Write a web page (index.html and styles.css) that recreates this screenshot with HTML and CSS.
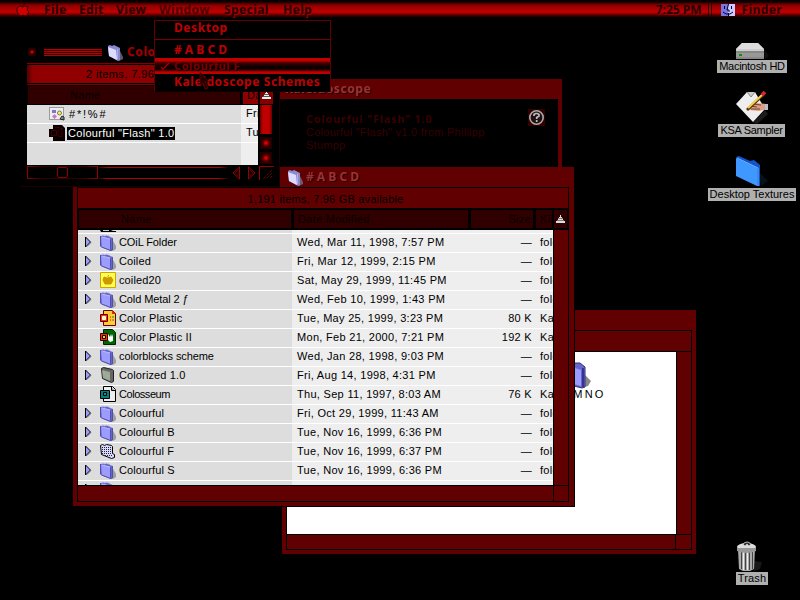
FILE: index.html
```html
<!DOCTYPE html>
<html lang="en">
<head>
<meta charset="utf-8">
<title>Finder</title>
<link rel="stylesheet" href="styles.css">
</head>
<body>
<svg class="defs" width="0" height="0">
  <symbol id="folder" viewBox="0 0 16 17">
    <path d="M12 5l4 7v3l-3 2z" fill="#555" opacity=".45"/>
    <path d="M1 2l2-1 2 1 1-1 3 1 1 1 3 1v12l-2 1-10-4z" fill="#6666cc"/>
    <path d="M1 3l9 2v11l-8-3z" fill="#9c9cff"/>
    <path d="M2 3l8 2M1 2l2-1 2 1 1-1 3 1" stroke="#c0c0f8" fill="none"/>
    <path d="M.5 2v10.500M10.500 5.500v10M12.500 4.500v11.500l-2 .5-9-3.500" stroke="#5050aa" fill="none"/>
  </symbol>
  <symbol id="folder-light" viewBox="0 0 16 17">
    <path d="M12 5l4 8v2l-4 2z" fill="#776e88" opacity=".8"/>
    <path d="M1 2l2-1 2 1 2-1 2 1 4 2v12l-2 1-9-5z" fill="#8a8ad0"/>
    <path d="M1 3l8 3 1 10-8-4z" fill="#dcdcff"/>
    <path d="M10.500 5v10" stroke="#aeaef0"/>
  </symbol>
  <symbol id="tri" viewBox="0 0 8 12"><path d="M1.500 1v10l5-5z" fill="#9c9cff" stroke="#000"/><path d="M3.500 10.500l4-4" stroke="#777" opacity=".5"/></symbol>
</svg>

<header class="menubar">
  <svg class="apple" width="14" height="14" viewBox="0 0 14 14"><path d="M9 0L7 3M7 4L4 3 1 5v4l3 4 3-1 3 1 3-4-2-2 1-3-3-1-2 1z" fill="#d00000" stroke="#240000" stroke-width=".8"/></svg>
  <nav><span class="m-file">File</span><span class="m-edit">Edit</span><span class="m-view">View</span><span class="m-window open">Window</span><span class="m-special">Special</span><span class="m-help">Help</span></nav>
  <span class="clock">7:25 PM</span>
  <span class="grip"></span>
  <svg class="face" width="14" height="12" viewBox="0 0 14 12"><path fill="#7777dd" d="M0 0h7v12H0z"/><path fill="#ccccff" d="M7 0h7v12H7z"/><path d="M3.500 2v3M10.500 2v3M7.500 0L6 6h2v2M2 8l3 2h4l3-2M7.500 9v3" stroke="#000033" fill="none"/></svg>
  <span class="finder">Finder</span>
</header>

<main class="desktop">
  <section class="window back">
    <div class="titlebar"></div>
    <div class="frame">
      <div class="info"></div>
      <div class="canvas">
        <div class="big-item">
          <svg width="32" height="32" viewBox="0 0 32 32"><path d="M24 14l8 8-3 5-7 2z" fill="#888"/><path d="M2 3l6-2 5 3 8 0 5 4v20l-3 1-20-5z" fill="#6666cc" stroke="#333377"/><path d="M3 5l19 6v16L3 22z" fill="#9c9cff"/><path d="M24 9v19" stroke="#333399" stroke-width="2"/></svg>
          <span>M N O</span>
        </div>
      </div>
      <div class="vbar"></div><div class="hbar"></div><div class="corner"></div>
    </div>
  </section>

  <section class="window about">
    <div class="titlebar"><span>Kaleidoscope</span></div>
    <div class="about-body">
      <div class="about-text"><b>Colourful "Flash" 1.0</b><p>Colourful "Flash" v1.0 from Phillipp<br>Stumpp</p></div>
      <svg class="help" width="17" height="17" viewBox="0 0 17 17"><path d="M0 0h17v17H0z" fill="#300"/><circle cx="8.500" cy="8.500" r="6.700" fill="#211" stroke="#aaa" stroke-width="1.600"/><path d="M6 7V5.500L7.500 4.500h2L11 5.500V7L8.700 8.500V10M8.700 11v2" fill="none" stroke="#bbb" stroke-width="1.700"/></svg>
    </div>
  </section>

  <section class="window abcd">
    <div class="titlebar"><svg width="16" height="17"><use href="#folder-light"/></svg><span># A B C D</span></div>
    <div class="frame">
      <div class="info">1,191 items, 7.96 GB available</div>
      <div class="heads"><span class="h-name">Name</span><span class="h-date">Date Modified</span><span class="h-size">Size</span><span class="h-kind">Kind</span><span class="h-sort"><svg width="9" height="8" viewBox="0 0 9 8"><path d="M4 0h1v2h1v2h1v2h2v2H0V6h2V4h1V2h1z" fill="#ddd"/><path d="M2 3.500h5M1 5.500h7" stroke="#777"/></svg></span></div>
      <div class="list">
        <div class="row part-top"><span class="name"><i></i><svg width="16" height="3" viewBox="0 0 16 3"><path d="M0 0h11l2 1h3v1H1z" fill="#000"/><path d="M3 .5h6" stroke="#ccc"/></svg></span></div>
        <div class="row"><span class="name"><svg width="8" height="12"><use href="#tri"/></svg><svg width="16" height="17"><use href="#folder"/></svg><b class="tight">COiL Folder</b></span><span class="date">Wed, Mar 11, 1998, 7:57 PM</span><span class="size">—</span><span class="kind">folder</span></div>
        <div class="row"><span class="name"><svg width="8" height="12"><use href="#tri"/></svg><svg width="16" height="17"><use href="#folder"/></svg><b>Coiled</b></span><span class="date">Fri, Mar 12, 1999, 2:15 PM</span><span class="size">—</span><span class="kind">folder</span></div>
        <div class="row"><span class="name"><svg width="8" height="12"><use href="#tri"/></svg><svg width="16" height="16" viewBox="0 0 16 16"><path d="M.5.5h15v15H.5z" fill="#ffff55" stroke="#d9a000"/><path d="M9 3L7.500 5M7 6L4 5 3 8l2 4 3 0 3 0 2-4-2-3-3 1z" fill="#cc9900" stroke="#cc9900"/></svg><b>coiled20</b></span><span class="date">Sat, May 29, 1999, 11:45 PM</span><span class="size">—</span><span class="kind">folder</span></div>
        <div class="row"><span class="name"><svg width="8" height="12"><use href="#tri"/></svg><svg width="16" height="17"><use href="#folder"/></svg><b class="tight">Cold Metal 2 ƒ</b></span><span class="date">Wed, Feb 10, 1999, 1:43 PM</span><span class="size">—</span><span class="kind">folder</span></div>
        <div class="row"><span class="name"><i></i><svg width="16" height="16" viewBox="0 0 16 16"><path d="M3.500.5h9l3 3v12h-12z" fill="#ffcc33" stroke="#660000"/><path d="M12 0v4h4" fill="#cc3300"/><path d="M.5 4.500h7v7h-7z" fill="#f30" stroke="#600"/><path d="M2.500 6.500h3v3h-3z" fill="#ffff66" stroke="#fff"/><path d="M10 7h1M10 10h1" stroke="#f00"/><path d="M12 7h2" stroke="#090"/><path d="M12 10h2" stroke="#36c"/></svg><b>Color Plastic</b></span><span class="date">Tue, May 25, 1999, 3:23 PM</span><span class="size">80 K</span><span class="kind">Kaleidoscope</span></div>
        <div class="row"><span class="name"><i></i><svg width="16" height="16" viewBox="0 0 16 16"><path d="M3.500.5h9l3 3v12h-12z" fill="#006600" stroke="#002200"/><path d="M8 5l2 3 1-3 1 3 1-3v7l-3 1-2-2z" fill="#fff"/><path d="M.5 4.500h7v7h-7z" fill="#f30" stroke="#300"/><path d="M2.500 6.500h3v3h-3z" fill="#fc3" stroke="#000"/></svg><b>Color Plastic II</b></span><span class="date">Mon, Feb 21, 2000, 7:21 PM</span><span class="size">192 K</span><span class="kind">Kaleidoscope</span></div>
        <div class="row"><span class="name"><svg width="8" height="12"><use href="#tri"/></svg><svg width="16" height="17"><use href="#folder"/></svg><b class="tight">colorblocks scheme</b></span><span class="date">Wed, Jan 28, 1998, 9:03 PM</span><span class="size">—</span><span class="kind">folder</span></div>
        <div class="row"><span class="name"><svg width="8" height="12"><use href="#tri"/></svg><svg width="16" height="16" viewBox="0 0 16 16"><path d="M1.500 1.500l2-1 9 2 1 1v11l-2 1-9-4z" fill="#666" stroke="#222"/><path d="M2 3l8 2v9l-7-3z" fill="#9a9"/><path d="M3 5h2v2H3zM7 8h2v2H7z" fill="#cca277"/><path d="M6 5h2v2H6zM4 9h2v2H4z" fill="#77b5aa"/></svg><b>Colorized 1.0</b></span><span class="date">Fri, Aug 14, 1998, 4:31 PM</span><span class="size">—</span><span class="kind">folder</span></div>
        <div class="row"><span class="name"><i></i><svg width="16" height="16" viewBox="0 0 16 16"><path d="M3.500.5h9l3 3v12h-12z" fill="#eee" stroke="#000"/><path d="M11.500 1v3.500H15" fill="#aaa" stroke="#000"/><path d="M.5 4.500h9v8h-9z" fill="#008080" stroke="#000"/><path d="M3.500 6.500h3v3h-3z" fill="#099" stroke="#000"/></svg><b class="tighter">Colosseum</b></span><span class="date">Thu, Sep 11, 1997, 8:03 AM</span><span class="size">76 K</span><span class="kind">Kaleidoscope</span></div>
        <div class="row"><span class="name"><svg width="8" height="12"><use href="#tri"/></svg><svg width="16" height="17"><use href="#folder"/></svg><b>Colourful</b></span><span class="date">Fri, Oct 29, 1999, 11:43 AM</span><span class="size">—</span><span class="kind">folder</span></div>
        <div class="row"><span class="name"><svg width="8" height="12"><use href="#tri"/></svg><svg width="16" height="17"><use href="#folder"/></svg><b>Colourful B</b></span><span class="date">Tue, Nov 16, 1999, 6:36 PM</span><span class="size">—</span><span class="kind">folder</span></div>
        <div class="row"><span class="name"><svg width="8" height="12"><use href="#tri"/></svg><svg width="16" height="16" viewBox="0 0 16 16"><path d="M.5 2.500l2-1 2 1 2-1 5 1 1 1v7l2 1v3l-3 1-10-4z" fill="#d8d8ff" stroke="#000"/><path d="M2 4.500h10M2 6.500h10M2 8.500h10M2 10.500h10M5 12.500h8" stroke="#223" stroke-dasharray="1 1"/></svg><b>Colourful F</b></span><span class="date">Tue, Nov 16, 1999, 6:37 PM</span><span class="size">—</span><span class="kind">folder</span></div>
        <div class="row"><span class="name"><svg width="8" height="12"><use href="#tri"/></svg><svg width="16" height="17"><use href="#folder"/></svg><b>Colourful S</b></span><span class="date">Tue, Nov 16, 1999, 6:36 PM</span><span class="size">—</span><span class="kind">folder</span></div>
        <div class="row part-end"><span class="name"><svg width="8" height="12"><use href="#tri"/></svg><svg width="16" height="17"><use href="#folder"/></svg><b>Colours ƒ</b></span></div>
      </div>
      <div class="vbar"></div><div class="hbar"></div><div class="corner"></div>
    </div>
  </section>

  <section class="window front">
    <div class="titlebar">
      <span class="box"></span><span class="stripes"></span>
      <svg width="16" height="17"><use href="#folder-light"/></svg><span class="title">Colo</span>
    </div>
    <div class="info"><span>2 items, 7.96</span></div>
    <div class="heads"><span class="h-name">Name</span><span class="h-date">Date</span><span class="h-sort"><svg width="9" height="8" viewBox="0 0 9 8"><path d="M4 0h1v2h1v2h1v2h2v2H0V6h2V4h1V2h1z" fill="#eee"/><path d="M2 3.500h5M1 5.500h7" stroke="#555"/></svg></span></div>
    <div class="middle">
      <div class="list">
        <div class="row"><span class="name"><svg width="16" height="14" viewBox="0 0 16 14"><path d="M.5.5h14v12H.5z" fill="#eee" stroke="#555" stroke-dasharray="1 1"/><path d="M3 3h4v3H3z" fill="#7777cc"/><circle cx="10.500" cy="6" r="2" fill="#ffee55" stroke="#776"/><path d="M5.500 7L8 9.500 5.500 12 3 9.500z" fill="#c7c"/><path d="M11 12l2-3 2 1v3z" fill="#888" stroke="#222"/></svg><b class="wide">#*!%#</b></span><span class="date">Fri,</span></div>
        <div class="row"><span class="name"><svg width="16" height="16" viewBox="0 0 16 16"><path d="M4 0h9l3 3v13H4v-4H0V4h4z" fill="#080000"/><path d="M2.500 5.500h5v5h-5zM9 5l4-2v9l-4-1zM6 2.500h5" fill="none" stroke="#400"/></svg><b class="selected">Colourful "Flash" 1.0</b></span><span class="date">Tue,</span></div>
        <div class="row last"><span class="name"></span><span class="date"></span></div>
      </div>
      <div class="scroll"><span class="thumb"></span><span class="box"></span><span class="box"></span></div>
    </div>
    <div class="bottom">
      <span class="hthumb"><i></i></span><span class="track"></span>
      <svg width="24" height="14" viewBox="0 0 24 14"><path d="M7.500 1v12L1 7zM16.500 1v12L23 7z" fill="#100" stroke="#900"/><path d="M6 4L3 7l3 3M18 4l3 3-3 3" stroke="#500" fill="none"/></svg>
      <svg class="grow" width="15" height="14" viewBox="0 0 15 14"><path d="M.5 14V.5H15" stroke="#900" fill="none"/><path d="M13 4L4 13M13 7l-6 6M13 10l-3 3" stroke="#800" stroke-dasharray="1 1"/></svg>
    </div>
  </section>

  <figure class="icon hd"><svg width="34" height="18" viewBox="0 0 34 18"><path d="M29 7l5 7-4 3z" fill="#111"/><path d="M7 1h16l6 6v10H1V7z" fill="#999"/><path d="M7 1h16l6 6H1z" fill="#ddd"/><path d="M1 8h28" stroke="#fff"/><path d="M1 10h28M1 16h28" stroke="#777"/><path d="M4 12h3v2H4z" fill="#090"/></svg><figcaption>Macintosh HD</figcaption></figure>
  <figure class="icon ksa"><svg width="34" height="33" viewBox="0 0 34 33"><path d="M18 32l12-13 3 4-11 10z" fill="#1b1b1b"/><path d="M1 13L12 1h8l10 17-12 13z" fill="#eee"/><path d="M12 1l4 5 4-5" stroke="#888" fill="#ccc"/><path d="M13 17l8-5 10 1 1 5-8 2-10-1z" fill="#dba080"/><path d="M15 15l7 1M16 18l9 0M18 13l8 1" stroke="#774030"/><path d="M30 13h3v6h-3z" fill="#bbc"/><path d="M12 19L29 3" stroke="#543300" stroke-width="3"/><path d="M13 17L27 4" stroke="#f4cd55" stroke-width="2"/><path d="M27 4l3-3" stroke="#e02030" stroke-width="3.500"/></svg><figcaption>KSA Sampler</figcaption></figure>
  <figure class="icon tex"><svg width="34" height="34" viewBox="0 0 34 34"><path d="M24 18l9 9-7 5z" fill="#06121a"/><path d="M1 3l3-1 11 5 4-1 6 5v21h-3z" fill="#1155cc"/><path d="M1 4l21 10v18L1 22z" fill="#3f98ff"/><path d="M2 4l21 10v18" fill="none" stroke="#75baff"/></svg><figcaption>Desktop Textures</figcaption></figure>
  <figure class="icon trash"><svg width="30" height="32" viewBox="0 0 30 32"><path d="M18 21l8 1-2 7-6 2z" fill="#181818"/><path d="M2 9h17l-1 20-4 2H7l-4-2z" fill="#aaa"/><path d="M5.500 12v17M9.500 12v18M13.500 12v18M16.500 12v17" stroke="#444"/><path d="M7.500 12v18M11.500 12v18" stroke="#eee"/><ellipse cx="10.500" cy="7" rx="9.500" ry="4" fill="#ddd"/><path d="M1 8v3q10 4 19 0V8" fill="#999"/><path d="M7 4q4-4 8 0l-2 2-2-2-2 2z" fill="#333" stroke="#bbb"/></svg><figcaption>Trash</figcaption></figure>

  <div class="menu">
    <div class="item first">Desktop</div>
    <div class="item abc"># A B C D</div>
    <div class="item hot"><svg width="14" height="12" viewBox="0 0 14 12"><path d="M1 7l2 2 6-6" stroke="#a00" stroke-width="1.300" fill="none"/></svg>Colourful F</div>
    <div class="item kal">Kaleidoscope Schemes</div>
  </div>
  <svg class="pointer" width="12" height="18" viewBox="0 0 12 18"><path d="M1 0l9 10H6l3 6-3 1-2-6-3 2z" fill="#200" stroke="#700" stroke-width=".7"/></svg>
</main>
</body>
</html>
```

FILE: styles.css
```css
* { box-sizing: border-box; }
body { margin: 0; width: 800px; height: 600px; overflow: hidden; background: #000; color: #000; font: 11px/14px "Liberation Sans", sans-serif; letter-spacing: .3px; white-space: nowrap; }
.defs { position: absolute; }
svg { display: block; flex: none; }
p, figure { margin: 0; }

.menubar { display: flex; align-items: center; height: 20px; padding: 0 18px 0 16px; background: linear-gradient(#000 0, #100000 2px, #600 4px, #960000 6px, #b00000 10px, #c80000 12px, #800000 14px, #300 16px, #000 18px); font: bold 12px/18px "Noto Sans", sans-serif; letter-spacing: .4px; color: #2a0000; text-shadow: 1px 1px #a00000; }
.menubar nav { display: flex; flex: 1; }
.m-file { width: 35px; margin-left: 14px; }
.m-edit { width: 37px; }
.m-view { width: 43px; }
.m-window { width: 65px; }
.m-special { width: 59px; }
.open { color: #500000; text-shadow: none; letter-spacing: .5px; }
.clock { letter-spacing: 0; }
.grip { width: 4px; height: 12px; margin: 0 9px 0 6px; border: solid #200; border-width: 0 1px; }
.face { margin-right: 7px; }

.window { position: absolute; display: flex; flex-direction: column; overflow: hidden; background: #600000; }
.titlebar { flex: none; display: flex; align-items: center; font: bold 12px/16px "Noto Sans", sans-serif; letter-spacing: .6px; color: #993333; text-shadow: 1px 1px #200; }
.frame { flex: 1; display: grid; border: 1px solid #000; }
.vbar, .info { border-bottom: 1px solid #000; }
.vbar { border-left: 1px solid #000; }

.back { left: 282px; top: 310px; width: 414px; height: 244px; padding: 0 4px 4px; }
.back .titlebar { height: 20px; }
.back .frame { grid-template: 21px 183px 1fr / 389px 1fr; }
.back .info, .abcd .info { grid-column: 1 / 3; }
.canvas { background: #fff; border-bottom: 1px solid #000; display: flex; justify-content: flex-end; padding: 7px 73px 0 0; }
.big-item { display: flex; flex-direction: column; align-items: flex-end; width: 62px; }
.big-item svg { margin-right: 12px; }
.big-item span { margin-top: -4px; letter-spacing: -.4px; }
.hbar { border-right: 1px solid #000; }

.about { left: 280px; top: 79px; width: 282px; height: 88px; padding-right: 4px; }
.about .titlebar { height: 20px; padding-left: 5px; }
.about-body { flex: 1; display: flex; background: #000; padding: 10px 13px 0 26px; color: #380000; }
.about-text { flex: 1; padding-top: 3px; line-height: 13px; letter-spacing: .26px; }
.about-text b { font: bold 11px/13px "Noto Sans", sans-serif; letter-spacing: .72px; }

.abcd { left: 73px; top: 167px; width: 502px; height: 340px; padding: 0 5px 4px 4px; border: solid #000; border-width: 0 1px 1px 0; }
.abcd .titlebar { height: 20px; padding-left: 210px; gap: 3px; letter-spacing: 0; }
.abcd .frame { grid-template: 21px 21px 256px 1fr / 476px 1fr; }
.info { text-align: center; line-height: 22px; }
.abcd .info { padding-left: 5px; letter-spacing: .2px; }
.heads { display: flex; line-height: 18px; }
.heads span { overflow: hidden; background: #300000; color: #080000; }
.abcd .heads { grid-column: 1 / 3; padding: 1px 0 2px 1px; gap: 3px; background: #000; }
.abcd .h-name { width: 212px; padding-left: 42px; }
.abcd .h-date { width: 174px; padding-left: 4px; }
.abcd .h-size { width: 62px; padding-right: 2px; text-align: right; }
.abcd .h-kind { width: 16px; padding-left: 4px; }
.abcd .h-sort { width: 13px; padding: 5px 0 0 2px; margin-left: -1px; }
.list { overflow: hidden; background: #fff; }
.row { display: grid; grid-template-columns: 214px 179px 61px 1fr; height: 19px; line-height: 18px; background: linear-gradient(#fff 1px, transparent 1px), linear-gradient(90deg, #ddd 214px, #eee 214px); }
.row b { font-weight: normal; letter-spacing: .12px; }
.row b.tight { letter-spacing: -.1px; }
.row b.tighter { letter-spacing: -.45px; }
.row b.wide { letter-spacing: 1.8px; }
.name { display: flex; align-items: center; padding-left: 6px; min-width: 0; }
.abcd .name { height: 18px; }
.abcd .name b { margin-top: -1px; }
.name i { width: 8px; }
.name > :nth-child(2) { margin: 0 3px 0 8px; }
.date { padding-left: 5px; }
.size { text-align: right; }
.kind { padding-left: 8px; overflow: hidden; min-width: 0; }
.row.part-top { height: 3px; background: linear-gradient(90deg, #ddd 214px, #eee 214px); }
.row.part-top .name { height: 3px; }
.abcd .list { width: 475px; border-bottom: 1px solid #000; }
.abcd .vbar { margin-left: -1px; }
.abcd .hbar { margin-right: 0; }

.front { left: 20px; top: 42px; width: 260px; height: 145px; background: #000; padding-left: 7px; border: solid #1a0000; border-width: 0 1px 1px 0; }
.front .titlebar { height: 20px; color: #a00000; }
.box { width: 12px; height: 12px; background: radial-gradient(#e00000 0 15%, #700000 35%, #260000 70%); border: 1px solid #200; }
.front .titlebar .box { width: 8px; height: 8px; margin-left: 1px; }
.stripes { width: 58px; height: 7px; margin: 0 5px 0 8px; background: repeating-linear-gradient(#b80000 0 1px, #300000 1px 2px); }
.title { margin-left: 4px; }
.front .info { height: 22px; padding: 1px 0; width: 231px; border: 1px solid #800000; border-width: 1px 0; line-height: 18px; margin-top: 1px; text-align: left; }
.front .info span { display: block; background: linear-gradient(90deg, #500 0, #900000 6px); padding-left: 59px; letter-spacing: .4px; height: 18px; overflow: hidden; }
.front .heads { height: 20px; padding: 1px 0 1px 1px; gap: 3px; }
.front .h-name { width: 212px; padding-left: 42px; }
.front .h-date { width: 15px; background: #900000; padding-left: 4px; }
.front .h-sort { width: 13px; background: #800000; padding: 5px 0 0 2px; margin-left: -1px; }
.middle { display: flex; height: 60px; }
.front .list { width: 231px; }
.front .row { grid-template-columns: 214px 1fr; height: 19px; padding: 0 0 1px; line-height: 16px; background: linear-gradient(transparent 18px, #fff 18px), linear-gradient(90deg, #ddd 214px, #eee 214px); }
.front .row.last { height: 22px; background: linear-gradient(90deg, #ddd 214px, #eee 214px); }
.front .name { padding-left: 22px; }
.front .name > b { margin: 0 0 0 3px; padding: 0 1px; line-height: 13px; }
.front .name > .selected { background: #000; color: #fff; margin-left: 2px; letter-spacing: .3px; }
.scroll { display: flex; flex-direction: column; align-items: center; gap: 3px; width: 16px; }
.thumb { width: 12px; height: 29px; background: linear-gradient(90deg, #600, #c00000 3px 9px, #600); }
.bottom { display: flex; height: 15px; padding-top: 1px; }
.hthumb { width: 71px; height: 13px; border: 1px solid; border-image: linear-gradient(90deg, #900, #300 20%, #300 80%, #900) 1; display: flex; justify-content: center; }
.hthumb i { width: 11px; border: solid #800; border-width: 1px; border-radius: 2px; }
.track { width: 129px; height: 12px; margin: 1px 4px 0 1px; background: linear-gradient(90deg, #300, #b00000 8px 120px, #200) top / 100% 1px no-repeat, linear-gradient(90deg, #300, #b00000 8px 120px, #200) bottom / 100% 1px no-repeat; }
.grow { margin-left: 3px; }

.icon { position: absolute; display: flex; flex-direction: column; align-items: center; letter-spacing: -.3px; }
.icon figcaption { width: 100%; height: 13px; background: #b0b0b0; line-height: 13px; text-align: center; }
.hd { left: 717px; top: 42px; width: 70px; }
.ksa { left: 718px; top: 91px; width: 67px; }
.tex { left: 708px; top: 154px; width: 88px; letter-spacing: 0; }
.trash { left: 736px; top: 540px; width: 32px; letter-spacing: .2px; }
.trash svg { margin-right: 2px; }

.menu { position: absolute; left: 154px; top: 20px; width: 177px; height: 72px; background: #000; border: 1px solid #600000; border-bottom-color: #100; font: bold 12px/17px "Noto Sans", sans-serif; letter-spacing: .58px; color: #c00000; }
.item { padding-left: 19px; }
.first { height: 19px; line-height: 14px; border-bottom: 1px solid #700; }
.abc { height: 18px; line-height: 20px; letter-spacing: 0; }
.hot { display: flex; align-items: center; height: 16px; line-height: 16px; padding-left: 5px; background: linear-gradient(#c00000 3px, #600 4px, #200 7px, #000 10px, #300 12px, #c00000 14px); color: #780000; text-shadow: 1px 1px #100; font-size: 11px; }
.kal { line-height: 15px; }
.pointer { position: absolute; left: 199px; top: 72px; }
```
